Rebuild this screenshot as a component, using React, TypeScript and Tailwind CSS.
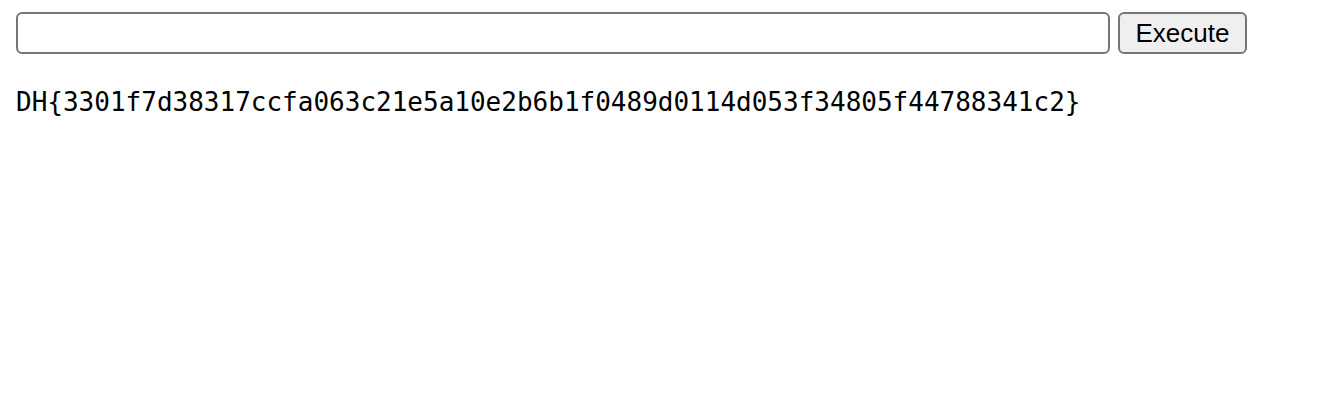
import React, { useState } from "react";

const App = () => {
  const [cmd, setCmd] = useState("");

  return (
    <div className="min-h-screen bg-white px-4 pt-3">
      <div className="flex items-center gap-2">
        <input
          type="text"
          value={cmd}
          onChange={(e) => setCmd(e.target.value)}
          className="h-[42px] w-[1094px] rounded-[6px] border-2 border-[#767676] bg-white px-2 text-[24px] outline-none"
        />
        <button className="h-[42px] w-[129px] rounded-[6px] border-2 border-[#767676] bg-[#efefef] text-[26px] leading-none text-black [font-family:'Liberation_Sans',Arial,sans-serif]">
          Execute
        </button>
      </div>
      <pre className="mt-[30px] text-[26px] leading-[36px] text-black [font-family:'DejaVu_Sans_Mono',monospace]">
        DH{"{"}3301f7d38317ccfa063c21e5a10e2b6b1f0489d0114d053f34805f44788341c2{"}"}
      </pre>
    </div>
  );
};

export default App;
